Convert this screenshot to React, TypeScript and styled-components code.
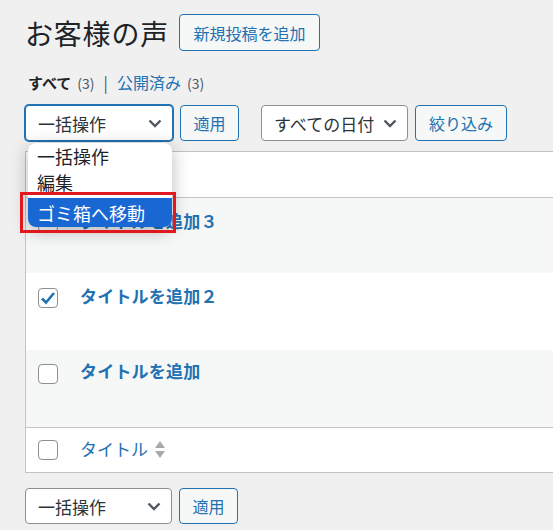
import React from 'react';
import styled, { createGlobalStyle } from 'styled-components';

const GlobalStyle = createGlobalStyle`
  body {
    margin: 0;
    background: #f0f0f1;
    font-family: "Noto Sans CJK JP", "Noto Sans", sans-serif;
    color: #1d2327;
    overflow: hidden;
  }
`;

const Page = styled.div`
  padding: 14px 0 0 25px;
  width: 560px;
`;

const HeadingRow = styled.div`
  display: flex;
  align-items: center;
  gap: 10px;
  height: 37px;
`;

const Title = styled.h1`
  margin: 0;
  font-size: 28px;
  font-weight: 400;
  line-height: 1;
  letter-spacing: 0.8px;
`;

const Button = styled.button<{ $w: number }>`
  box-sizing: border-box;
  width: ${(p) => p.$w}px;
  height: ${(p) => (p.$w > 100 ? 37 : 36)}px;
  padding: 0;
  border: 1px solid #2271b1;
  border-radius: 4px;
  background: #f6f7f7;
  color: #2271b1;
  font-family: inherit;
  font-size: 16px;
  line-height: 1;
`;

const SubSub = styled.div`
  margin-top: 21px;
  font-size: 16px;
  line-height: 20px;
  display: flex;
  align-items: baseline;
  gap: 6px;
  padding-left: 3px;
`;

const Current = styled.b`
  font-weight: 700;
  font-size: 15px;
`;

const Count = styled.span`
  color: #50575e;
  font-size: 14px;
`;

const Sep = styled.span`
  color: #50575e;
  margin: 0 3px;
`;

const Link = styled.a`
  color: #2271b1;
  text-decoration: none;
`;

const Toolbar = styled.div<{ $top: number }>`
  position: relative;
  display: flex;
  align-items: center;
  gap: 7px;
  margin-top: ${(p) => p.$top}px;
`;

const Select = styled.div<{ $w: number; $focus?: boolean; $ml?: number }>`
  box-sizing: border-box;
  width: ${(p) => p.$w}px;
  height: 36px;
  margin-left: ${(p) => p.$ml || 0}px;
  padding: 0 10px 0 12px;
  display: flex;
  align-items: center;
  justify-content: space-between;
  background: #fff;
  border: 1px solid ${(p) => (p.$focus ? '#2271b1' : '#8c8f94')};
  box-shadow: ${(p) => (p.$focus ? '0 0 0 1px #2271b1' : 'none')};
  border-radius: 4px;
  font-size: 17px;
  color: #2c3338;
`;

const Chevron = () => (
  <svg width="14" height="9" viewBox="0 0 14 9">
    <path d="M1.5 1.5 L7 7 L12.5 1.5" fill="none" stroke="#50575e" strokeWidth="2.4" />
  </svg>
);

const Menu = styled.div`
  position: absolute;
  left: 3px;
  top: 38px;
  width: 144px;
  background: #fff;
  border-radius: 8px;
  box-shadow: 0 4px 18px rgba(0, 0, 0, 0.28);
  overflow: hidden;
  z-index: 2;
`;

const MenuItem = styled.div<{ $active?: boolean }>`
  height: ${(p) => (p.$active ? 29 : 26)}px;
  padding-left: 9px;
  display: flex;
  align-items: center;
  font-size: 18px;
  color: ${(p) => (p.$active ? '#fff' : '#1d2327')};
  background: ${(p) => (p.$active ? '#1967d2' : 'transparent')};
  margin-top: ${(p) => (p.$active ? 3 : 0)}px;
`;

const Highlight = styled.div`
  position: absolute;
  left: -5px;
  top: 87px;
  width: 150px;
  height: 35px;
  border: 3px solid #e1191e;
  z-index: 3;
`;

const Table = styled.div`
  margin-top: 10px;
  width: 560px;
  border: 1px solid #c3c4c7;
  background: #fff;
`;

const Row = styled.div<{ $h: number; $alt?: boolean; $line?: 'top' | 'bottom' }>`
  height: ${(p) => p.$h}px;
  display: flex;
  align-items: flex-start;
  background: ${(p) => (p.$alt ? '#f6f7f7' : '#fff')};
  border-top: ${(p) => (p.$line === 'top' ? '1px solid #c3c4c7' : 'none')};
  border-bottom: ${(p) => (p.$line === 'bottom' ? '1px solid #c3c4c7' : 'none')};
  box-sizing: border-box;
`;

const CheckCell = styled.div<{ $pad: number }>`
  box-sizing: border-box;
  width: 54px;
  flex-shrink: 0;
  padding: ${(p) => p.$pad}px 0 0 12px;
`;

const Box = styled.div`
  box-sizing: border-box;
  width: 20px;
  height: 20px;
  border: 1px solid #8c8f94;
  border-radius: 4px;
  background: #fff;
  display: flex;
  align-items: center;
  justify-content: center;
`;

const RowTitle = styled.a<{ $pad: number }>`
  padding-top: ${(p) => p.$pad}px;
  font-size: 17px;
  font-weight: 700;
  line-height: 20px;
  color: #2271b1;
  text-decoration: none;
  letter-spacing: 0.2px;
`;

const ColTitle = styled.a<{ $pad: number }>`
  padding-top: ${(p) => p.$pad}px;
  font-size: 17px;
  line-height: 20px;
  color: #2271b1;
  text-decoration: none;
  display: flex;
  align-items: center;
  gap: 6px;
`;

const SortArrows = () => (
  <svg width="12" height="20" viewBox="0 0 12 20">
    <path d="M6 2 L11 9 L1 9 Z" fill="#a7aaad" />
    <path d="M6 19 L11 12 L1 12 Z" fill="#a7aaad" />
  </svg>
);

const Checkbox = ({ checked }: { checked?: boolean }) => (
  <Box>
    {checked && (
      <svg width="16" height="14" viewBox="0 0 16 14">
        <path d="M2 7.5 L6 11.5 L14 2" fill="none" stroke="#2271b1" strokeWidth="2.6" />
      </svg>
    )}
  </Box>
);

const posts = [
  { title: 'タイトルを追加３', checked: false, alt: true, h: 75, pad: 14, tpad: 13 },
  { title: 'タイトルを追加２', checked: true, alt: false, h: 77, pad: 15, tpad: 13 },
  { title: 'タイトルを追加', checked: false, alt: true, h: 77, pad: 14, tpad: 11 },
];

export default function App() {
  return (
    <Page>
      <GlobalStyle />
      <HeadingRow>
        <Title>お客様の声</Title>
        <Button $w={141}>新規投稿を追加</Button>
      </HeadingRow>
      <SubSub>
        <Current>すべて</Current>
        <Count>(3)</Count>
        <Sep>|</Sep>
        <Link>公開済み</Link>
        <Count>(3)</Count>
      </SubSub>
      <Toolbar $top={12}>
        <Select $w={148} $focus>
          一括操作
          <Chevron />
        </Select>
        <Button $w={59}>適用</Button>
        <Select $w={147} $ml={15}>
          すべての日付
          <Chevron />
        </Select>
        <Button $w={92}>絞り込み</Button>
        <Menu>
          <MenuItem>一括操作</MenuItem>
          <MenuItem>編集</MenuItem>
          <MenuItem $active>ゴミ箱へ移動</MenuItem>
        </Menu>
        <Highlight />
      </Toolbar>
      <Table>
        <Row $h={46} $line="bottom">
          <CheckCell $pad={12}>
            <Checkbox />
          </CheckCell>
          <ColTitle $pad={12}>
            タイトル
            <SortArrows />
          </ColTitle>
        </Row>
        {posts.map((p) => (
          <Row key={p.title} $h={p.h} $alt={p.alt}>
            <CheckCell $pad={p.pad}>
              <Checkbox checked={p.checked} />
            </CheckCell>
            <RowTitle $pad={p.tpad}>{p.title}</RowTitle>
          </Row>
        ))}
        <Row $h={45} $line="top">
          <CheckCell $pad={12}>
            <Checkbox />
          </CheckCell>
          <ColTitle $pad={11}>
            タイトル
            <SortArrows />
          </ColTitle>
        </Row>
      </Table>
      <Toolbar $top={15}>
        <Select $w={147}>
          一括操作
          <Chevron />
        </Select>
        <Button $w={59}>適用</Button>
      </Toolbar>
    </Page>
  );
}
